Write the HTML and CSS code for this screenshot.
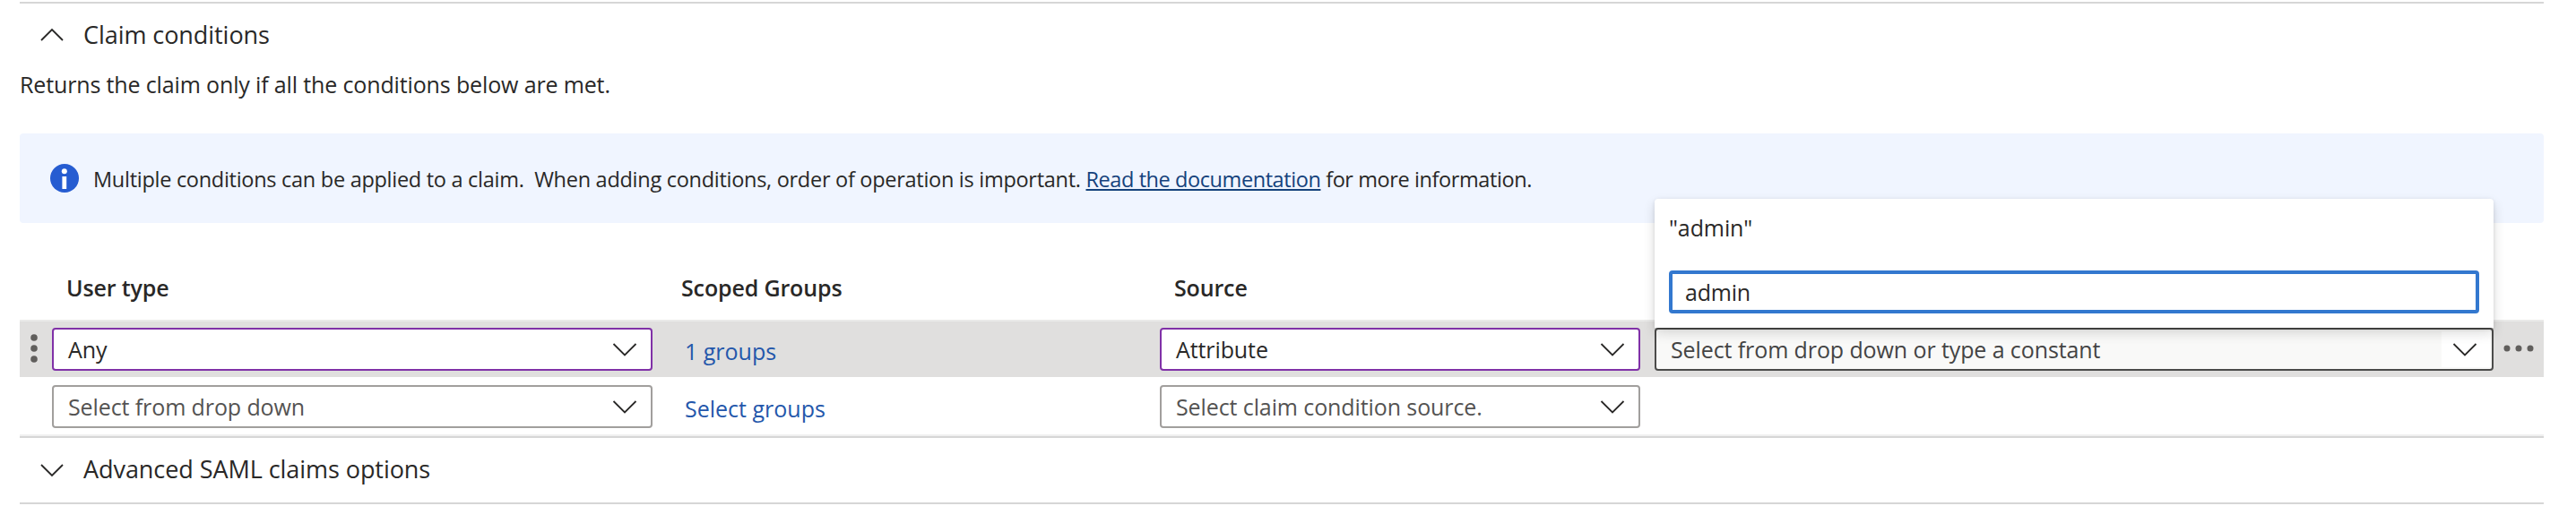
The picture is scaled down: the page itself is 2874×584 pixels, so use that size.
FILE: index.html
```
<!DOCTYPE html>
<html lang="en">
<head>
<meta charset="utf-8">
<title>Claim conditions</title>
<link rel="stylesheet" href="styles.css">
</head>
<body>
<main class="panel">
  <section class="section">
    <header class="section-head">
      <svg class="chev" width="28" height="18" viewBox="0 0 28 18"><path d="M2 15 14 3 26 15"/></svg>
      <h2 class="section-title">Claim conditions</h2>
    </header>
    <p class="desc">Returns the claim only if all the conditions below are met.</p>
    <div class="info">
      <svg class="info-icon" width="32" height="32" viewBox="0 0 32 32"><circle cx="16" cy="16" r="16" fill="#265cd1"/><circle cx="15.8" cy="8.3" r="3" fill="#fff"/><rect x="13.4" y="14" width="4.8" height="14" fill="#fff"/></svg>
      <p class="info-text">Multiple conditions can be applied to a claim.&nbsp; When adding conditions, order of operation is important. <a class="doc-link">Read the documentation</a><span class="info-tail"> for more information.</span></p>
    </div>
    <div class="grid grid-head">
      <span></span>
      <span class="col-title">User type</span>
      <span class="col-title scoped">Scoped Groups</span>
      <span class="col-title">Source</span>
    </div>
    <div class="grid row row-active">
      <svg class="drag" width="8" height="34" viewBox="0 0 8 34"><circle cx="4" cy="5" r="3.8"/><circle cx="4" cy="17" r="3.8"/><circle cx="4" cy="29" r="3.8"/></svg>
      <div class="select changed"><span>Any</span><svg class="chev" width="28" height="18" viewBox="0 0 28 18"><path d="M1.5 3 14 15.5 26.5 3"/></svg></div>
      <a class="group-link">1 groups</a>
      <div class="select changed"><span>Attribute</span><svg class="chev" width="28" height="18" viewBox="0 0 28 18"><path d="M1.5 3 14 15.5 26.5 3"/></svg></div>
      <span></span>
      <div class="combo">
        <div class="select open"><span>Select from drop down or type a constant</span><span class="caret"><svg class="chev" width="28" height="18" viewBox="0 0 28 18"><path d="M1.5 3 14 15.5 26.5 3"/></svg></span></div>
        <div class="popup">
          <div class="option">"admin"</div>
          <div class="filter">admin</div>
        </div>
      </div>
      <svg class="more" width="34" height="8" viewBox="0 0 34 8"><circle cx="4" cy="4" r="3.5"/><circle cx="17" cy="4" r="3.5"/><circle cx="30" cy="4" r="3.5"/></svg>
    </div>
    <div class="grid row">
      <span></span>
      <div class="select empty"><span>Select from drop down</span><svg class="chev" width="28" height="18" viewBox="0 0 28 18"><path d="M1.5 3 14 15.5 26.5 3"/></svg></div>
      <a class="group-link">Select groups</a>
      <div class="select empty"><span>Select claim condition source.</span><svg class="chev" width="28" height="18" viewBox="0 0 28 18"><path d="M1.5 3 14 15.5 26.5 3"/></svg></div>
    </div>
    <div class="table-end"></div>
  </section>
  <section class="section last">
    <header class="section-head">
      <svg class="chev" width="28" height="18" viewBox="0 0 28 18"><path d="M2 3 14 15 26 3"/></svg>
      <h2 class="section-title">Advanced SAML claims options</h2>
    </header>
  </section>
</main>
</body>
</html>
```
FILE: styles.css
```
* { box-sizing: border-box; }
body {
  margin: 0;
  background: #fff;
  color: #292827;
  font: 25px/36px "Open Sans", "Noto Sans", sans-serif;
}
h2, p { margin: 0; font-weight: 400; }
.panel { padding: 2px 36px 0 22px; }
.section { border-top: 2px solid #d6d6d6; }
.chev { flex: none; fill: none; stroke: #292827; stroke-width: 1.8; }
.section-head {
  display: flex;
  align-items: center;
  gap: 21px;
  height: 70px;
  padding-left: 22px;
}
.section-title { font-size: 27px; letter-spacing: -0.06px; white-space: nowrap; }
.desc { height: 40px; line-height: 40px; letter-spacing: -0.14px; }
.info {
  display: flex;
  align-items: center;
  gap: 16px;
  height: 100px;
  margin-top: 35px;
  padding-left: 34px;
  border-radius: 4px;
  background: #f0f5ff;
}
.info-text { padding-top: 2px; font-size: 23.5px; letter-spacing: -0.28px; white-space: nowrap; }
.doc-link {
  color: #15427c;
  letter-spacing: -0.42px;
  text-decoration: underline;
  text-decoration-thickness: 2px;
  text-underline-offset: 2px;
}
.info-tail { letter-spacing: -0.41px; }
.grid {
  display: grid;
  grid-template-columns: 36px 670px 566px 536px 16px 936px 56px;
}
.grid-head { height: 72px; margin-top: 36px; align-items: center; }
.col-title { padding-left: 16px; font-weight: 600; letter-spacing: -0.14px; }
.scoped { padding-left: 32px; }
.row { height: 64px; border-top: 2px solid transparent; padding-top: 7px; align-items: start; }
.row-active { background: #e0dfde; border-top-color: #eaeae9; }
.drag { margin: 6px 0 0 12px; fill: #605e5c; }
.more { margin: 19px 0 0 11px; fill: #605e5c; }
.select {
  display: flex;
  align-items: center;
  justify-content: space-between;
  height: 48px;
  padding: 0 15px 0 16px;
  border: 2px solid #a19f9d;
  border-radius: 4px;
  background: #fff;
  letter-spacing: -0.1px;
}
.changed { border-color: #8031a7; }
.empty { color: #545352; }
.open { border-color: #4b4b4a; background: #f9f9f8; color: #444; padding-right: 2px; }
.caret {
  display: flex;
  align-items: center;
  justify-content: center;
  width: 54px;
  height: 40px;
  padding-right: 3px;
  background: #fff;
}
.group-link { padding: 8px 0 0 36px; color: #2457ab; }
.combo { position: relative; }
.popup {
  position: absolute;
  left: 0;
  bottom: 48px;
  width: 936px;
  height: 144px;
  padding: 16px;
  border-radius: 4px 4px 0 0;
  background: #fff;
  box-shadow: 0 6px 14px rgba(0, 0, 0, .14), 0 1px 4px rgba(0, 0, 0, .1);
  clip-path: inset(-30px -30px -44px -30px);
}
.option { height: 64px; line-height: 32px; letter-spacing: -0.1px; }
.filter {
  display: flex;
  align-items: center;
  height: 48px;
  padding: 0 0 1px 14px;
  border: 4px solid #3378cf;
  border-radius: 4px;
  letter-spacing: -0.2px;
}
.table-end { height: 2px; background: #f0f0f0; }
.last { border-bottom: 2px solid #d6d6d6; }
.last .section-head { height: 72px; }
.last .section-title { padding-bottom: 2px; }
```
